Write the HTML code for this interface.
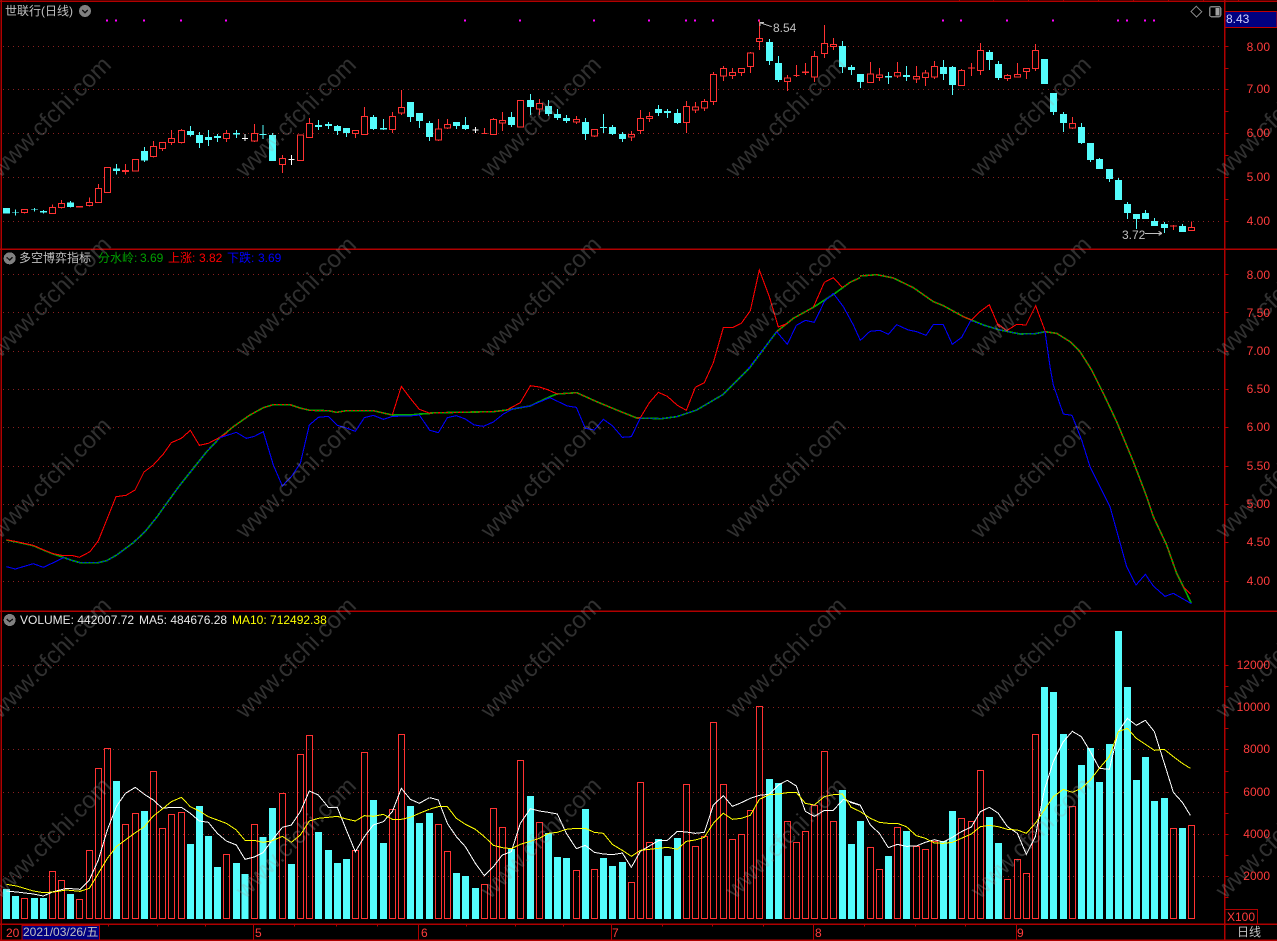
<!DOCTYPE html>
<html><head><meta charset="utf-8"><title>世联行(日线)</title>
<style>
html,body{margin:0;padding:0;background:#000;width:1277px;height:941px;overflow:hidden}
#w{position:relative;width:1277px;height:941px;background:#000;overflow:hidden}
svg{position:absolute;left:0;top:0}
.t{position:absolute;white-space:pre;font:12px/14px "Liberation Sans","Noto Sans CJK SC",sans-serif;color:#c0c0c0}
.r{color:#ff3c3c}
.a{right:7px}
</style></head><body><div id="w">
<svg width="1277" height="941" viewBox="0 0 3831 2823" shape-rendering="crispEdges" fill="none">
<!-- grid -->
<path stroke="#8a2020" stroke-width="3" stroke-dasharray="3 12" d="M9 140H3660M9 268H3660M9 400H3660M9 532H3660M9 664H3660M9 823H3660M9 937H3660M9 1054H3660M9 1168H3660M9 1282H3660M9 1399H3660M9 1514H3660M9 1628H3660M9 1744H3660M9 1996H3660M9 2122H3660M9 2248H3660M9 2377H3660M9 2503H3660M9 2629H3660"/>
<!-- magenta dots -->
<path stroke="#ff00ff" stroke-width="6" d="M321 59V65M348 59V65M432 59V65M543 59V65M678 59V65M1395 59V65M1560 59V65M1782 59V65M1947 59V65M2058 59V65M2085 59V65M2139 59V65M2277 59V65M2829 59V65M2883 59V65M3021 59V65M3159 59V65M3354 59V65M3381 59V65M3435 59V65M3462 59V65"/>
<!-- candles 1 -->
<g>
<path stroke="#ff3232" stroke-width="3" d="M73 628V641M157 613V641M184 600V626M268 592V620M295 552V608M376 492V524M460 423V472M487 427V453M514 390V435M544 387V431M679 390V426M763 372V426M847 465V519M928 354V413M1066 390V414M1093 321V405M1177 336V399M1204 270V345"/>
<path stroke="#ff3232" stroke-width="3" fill="#000" d="M64 628H82V638H64ZM148 622H166V641H148ZM175 610H193V623H175ZM259 607H277V617H259ZM286 565H304V608H286ZM313 502H331V578H313ZM397 478H415V513H397ZM451 439H469V470H451ZM478 427H496V446H478ZM505 415H523V428H505ZM535 391H553V428H535ZM670 400H688V416H670ZM754 400H772V423H754ZM838 475H856V494H838ZM892 405H910V482H892ZM919 371H937V413H919ZM1057 391H1075V401H1057ZM1084 349H1102V404H1084ZM1168 349H1186V389H1168ZM1195 322H1213V339H1195Z"/>
<path fill="#ff3232" d="M228 618H249V623H228ZM366 510H387V516H366Z"/>
<path stroke="#54fcfc" stroke-width="3" d="M46 628V647M103 624V635M130 630V641M211 603V623M349 492V524M433 441V486M571 378V410M598 396V444M625 390V438M652 402V426M709 390V414M789 375V417M817 399V405M955 360V390M985 366V387M1012 375V405M1039 384V411M1120 345V390M1150 357V390M1231 306V366M1258 339V384M1288 363V423"/>
<path stroke="#54fcfc" stroke-width="21" d="M19 624V641M46 637V639M103 628V630M130 633V638M211 608V621M349 506V513M433 453V481M571 393V405M598 405V429M625 411V420M652 408V414M709 399V404M789 402V405M817 405V483M955 375V381M985 372V378M1012 378V393M1039 384V399M1120 351V387M1150 384V389M1231 306V351M1258 339V363M1288 369V411"/>
<path stroke="#fff" stroke-width="3" d="M735 402V423M874 465V495M726 416H744M865 478H883"/>
</g>
<!-- candles 2 -->
<g transform="translate(1290,0)">
<path stroke="#ff3232" stroke-width="3" d="M25 357V423M52 357V387M163 384V402M190 354V405M217 336V393M328 297V345M439 348V372M493 388V411M604 393V423M631 330V402M658 336V366M769 303V399M796 306V339M823 297V333M850 216V315M880 198V243M907 204V237M934 204V228M961 156V219M988 60V150M1072 225V273M1099 195V231M1126 189V225M1153 153V246M1183 75V174M1210 114V150M154 400H172M1090 227H1108"/>
<path stroke="#ff3232" stroke-width="3" fill="#000" d="M16 387H34V420H16ZM43 373H61V384H43ZM181 358H199V404H181ZM208 361H226V369H208ZM262 301H280V381H262ZM319 310H337V327H319ZM430 358H448V366H430ZM484 389H502V408H484ZM595 403H613V411H595ZM622 355H640V392H622ZM649 349H667V356H649ZM760 319H778V368H760ZM787 321H805V330H787ZM814 304H832V324H814ZM841 223H859V305H841ZM871 205H889V228H871ZM898 217H916V227H898ZM925 205H943V218H925ZM952 159H970V200H952ZM979 115H997V125H979ZM1063 234H1081V245H1063ZM1144 169H1162V231H1144ZM1174 130H1192V161H1174ZM1201 133H1219V140H1201Z"/>
<path fill="#ff3232" d="M1116 214H1137V219H1116Z"/>
<path stroke="#54fcfc" stroke-width="3" d="M79 366V387M106 351V390M244 336V381M301 282V345M355 300V348M382 327V360M409 345V369M466 354V420M520 342V399M547 375V405M577 396V426M685 315V348M712 327V354M742 327V372M1018 117V195M1045 168V246M1237 123V219M1264 195V225M1291 222V264"/>
<path stroke="#54fcfc" stroke-width="21" d="M79 366V378M106 375V387M244 351V375M301 300V321M355 318V342M382 342V354M409 354V363M466 366V402M520 381V384M547 381V402M577 402V417M685 327V339M712 333V339M742 339V369M1018 126V183M1045 189V240M1237 138V201M1264 201V210M1291 222V246"/>
<path stroke="#fff" stroke-width="3" d="M136 381V399M127 390H145"/>
<path stroke="#c0c0c0" stroke-width="3" d="M990 68L1025 80M990 68H1002M990 68V78"/>
</g>
<!-- candles 3 -->
<g transform="translate(2550,0)">
<path stroke="#ff3232" stroke-width="3" d="M61 186V249M88 204V243M142 186V234M199 198V249M226 210V258M253 183V237M334 207V258M364 189V228M391 129V225M472 222V243M502 189V231M529 204V237M556 132V213M667 351V387M970 675V690M1024 664V693"/>
<path stroke="#ff3232" stroke-width="3" fill="#000" d="M52 222H70V248H52ZM79 225H97V233H79ZM133 217H151V228H133ZM190 229H208V237H190ZM217 219H235V233H217ZM244 199H262V231H244ZM325 211H343V257H325ZM382 151H400V211H382ZM463 226H481V236H463ZM493 223H511V231H493ZM520 205H538V214H520ZM547 151H565V205H547ZM658 370H676V384H658ZM1015 683H1033V692H1015Z"/>
<path fill="#ff3232" d="M354 202H375V206H354ZM960 676H981V680H960Z"/>
<path stroke="#54fcfc" stroke-width="3" d="M115 216V252M169 198V243M280 180V240M307 198V285M418 150V210M445 183V240M610 279V345M640 336V396M694 369V432M721 429V486M748 474V507M778 507V546M805 534V600M832 606V657M859 642V687M886 630V657M913 654V678M943 666V699M997 672V696"/>
<path stroke="#54fcfc" stroke-width="21" d="M115 228V233M169 225V231M280 201V222M307 201V255M418 156V180M445 192V234M583 177V252M610 279V336M640 342V369M694 381V429M721 429V480M748 477V507M778 507V537M805 540V600M832 612V639M859 642V657M886 639V657M913 663V678M943 672V684M997 678V696"/>
<path stroke="#c0c0c0" stroke-width="3" d="M885 700H936M936 700l-10-6M936 700l-10 6"/>
</g>
<!-- indicator pane: central line -->
<g stroke="#00a800" stroke-width="5">
<path transform="translate(0,1110)" d="M19 510L50 516 100 527 130 540 160 552 190 562 215 571 240 578 295 578 320 572 350 555 400 518 435 485 470 442 500 400 540 345 580 295 620 245 660 203 700 170 750 135 790 113 820 104 870 104 900 114 930 121 985 122 1010 127 1040 122 1120 122 1150 129 1177 135 1230 135 1260 132 1290 131"/>
<path transform="translate(1290,750)" d="M0 489L80 487 190 485 230 480 300 468 360 440 380 432 440 428 500 455 570 484 620 504 695 506 740 500 800 480 880 433 960 352 1040 245 1090 205 1150 172 1215 130 1260 97 1290 83"/>
<path transform="translate(2100,750)" d="M480 78L530 74 580 84 640 113 700 155 730 167 790 200 850 225 900 240"/>
<path transform="translate(2970,870)" d="M30 120L90 132 135 131 165 125 200 130 240 155 270 185 305 240 340 310 380 395 430 515 470 620 490 680 530 765 560 850 580 890 604 940"/>
</g>
<!-- red line solid -->
<g stroke="#ff0000" stroke-width="3.2">
<path transform="translate(0,1110)" d="M19 509L50 515 100 526 130 539 160 551 190 557 215 556 238 562 270 545 295 512 320 450 348 380 378 376 405 360 432 306 460 285 490 252 514 218 544 205 571 181 598 226 625 220 652 206 680 190M1177 135L1204 49 1231 85 1258 118 1290 130"/>
<path transform="translate(1290,750)" d="M230 480L271 458 301 407 328 411 355 420 382 432M620 504L631 503 658 458 685 427 712 439 742 466 769 481 796 412 823 398 850 338 880 233 907 233 934 220 961 182 988 60 1018 140 1045 231 1072 220M1150 172L1183 97 1210 83 1237 112"/>
<path transform="translate(2100,750)" d="M790 200L815 210 840 185 868 164 895 228 900 232"/>
<path transform="translate(2970,870)" d="M0 50L22 100 50 122 80 103 108 105 137 47 165 122M580 890L602 912"/>
<path stroke-dasharray="6 6" transform="translate(0,1110)" d="M660 203L700 170 750 135 790 113 820 104 870 104 900 114 930 121 985 122 1010 127 1040 122 1120 122 1150 129 1177 135"/>
<path stroke-dasharray="6 6" transform="translate(1290,750)" d="M0 489L80 487 190 485 230 480M382 432L440 428 500 455 570 484 620 504M1040 245L1090 205 1150 172M1237 112L1260 97 1290 83"/>
<path stroke-dasharray="6 6" transform="translate(2100,750)" d="M480 78L530 74 580 84 640 113 700 155 730 167 790 200"/>
<path stroke-dasharray="6 6" transform="translate(2970,870)" d="M165 125L200 130 240 155 270 185 305 240 340 310 380 395 430 515 470 620 490 680 530 765 560 850 580 890"/>
</g>
<!-- blue line -->
<g stroke="#0000ff" stroke-width="3.2">
<path transform="translate(0,1110)" d="M19 590L46 597 100 581 130 592 160 578 190 563M660 203L709 187 739 205 763 199 790 185 820 285 847 348 874 320 901 280 928 165 955 142 985 139 1012 166 1039 174 1066 184 1093 143 1120 136 1150 148 1177 139 1230 138 1258 135 1290 182"/>
<path transform="translate(1290,750)" d="M0 541L25 548 52 503 79 497 106 507 133 525 160 529 190 516 220 492 250 476 300 468 360 443 412 468 439 472 466 535 493 540 520 508 547 527 577 562 604 560 631 504M1040 245L1072 283 1099 226 1126 211 1153 217 1183 155 1210 130"/>
<path transform="translate(2100,750)" d="M400 130L430 170 460 225 481 271 510 244 540 241 565 253 590 224 625 240 650 245 678 256 700 224 730 224 757 283 785 262 812 212"/>
<path transform="translate(2970,870)" d="M165 125L180 230 190 285 220 372 246 376 275 450 300 530 360 650 385 740 410 830 438 885 466 853 490 888 525 919 550 910 604 941"/>
<path stroke-dasharray="6 6" transform="translate(0,1110)" d="M190 562L215 571 240 578 295 578 320 572 350 555 400 518 435 485 470 442 500 400 540 345 580 295 620 245 660 203"/>
<path stroke-dasharray="6 6" transform="translate(1290,750)" d="M631 504L695 506 740 500 800 480 880 433 960 352 1040 245"/>
<path stroke-dasharray="6 6" transform="translate(2100,750)" d="M145 355L230 245"/>
<path stroke-dasharray="6 6" transform="translate(2100,750)" d="M812 212L850 225 900 240"/>
<path stroke-dasharray="6 6" transform="translate(2970,870)" d="M30 120L90 132 135 131 165 125"/>
</g>
<!-- volume bars -->
<g transform="translate(0,1830)">
<path stroke="#ff3232" stroke-width="3" d="M64 865H82V926H64ZM148 784H166V926H148ZM175 811H193V926H175ZM229 868H247V926H229ZM259 721H277V926H259ZM286 475H304V926H286ZM313 415H331V926H313ZM367 643H385V926H367ZM397 610H415V926H397ZM451 484H469V926H451ZM478 655H496V926H478ZM505 613H523V926H505ZM535 607H553V926H535ZM670 733H688V926H670ZM754 643H772V926H754ZM838 550H856V926H838ZM892 433H910V926H892ZM919 376H937V926H919ZM1057 721H1075V926H1057ZM1084 427H1102V926H1084ZM1168 598H1186V926H1168ZM1195 373H1213V926H1195Z"/>
<path stroke="#54fcfc" stroke-width="21" d="M19 837V927M46 858V927M103 864V927M130 864V927M211 852V927M349 513V927M433 603V927M571 702V927M598 588V927M625 678V927M652 771V927M709 759V927M735 792V927M789 681V927M817 594V927M874 762V927M955 666V927M985 720V927M1012 759V927M1039 747V927M1120 570V927M1150 699V927M1231 588V927M1258 639V927M1288 609V927"/>
<path stroke="#fff" stroke-width="3" d="M19 843L50 846 100 852 130 858 160 845 200 835 240 838 268 810 295 750 322 660 349 590 376 550 406 532 433 553 460 570 487 595 514 592 544 592 571 610 598 633 625 637 652 670 679 693 709 705 735 748 763 741 789 728 817 690 847 652 874 645 901 605 928 543 955 555 985 592 1012 592 1039 660 1066 725 1093 680 1120 645 1150 635 1177 605 1204 535 1231 568 1258 580 1288 563"/>
<path stroke="#ffff00" stroke-width="3" d="M19 823L50 828 100 843 130 848 160 846 200 840 240 844 268 835 295 790 322 745 349 710 376 690 406 668 433 650 460 618 487 597 514 575 544 562 571 590 598 603 625 620 652 630 679 640 709 660 735 691 763 691 789 697 817 692 847 679 874 697 901 675 928 633 955 625 985 622 1012 619 1039 627 1066 633 1093 617 1120 619 1150 613 1177 628 1204 628 1231 622 1258 610 1288 598"/>
</g>
<g transform="translate(1290,1830)">
<path stroke="#ff3232" stroke-width="3" d="M16 643H34V926H16ZM43 724H61V926H43ZM154 823H172V926H154ZM181 595H199V926H181ZM208 652H226V926H208ZM262 451H280V926H262ZM319 637H337V926H319ZM430 781H448V926H430ZM484 778H502V926H484ZM595 817H613V926H595ZM622 517H640V926H622ZM649 697H667V926H649ZM760 523H778V926H760ZM787 709H805V926H787ZM814 679H832V926H814ZM841 337H859V926H841ZM871 523H889V926H871ZM898 688H916V926H898ZM925 673H943V926H925ZM952 601H970V926H952ZM979 289H997V926H979ZM1063 634H1081V926H1063ZM1090 697H1108V926H1090ZM1117 664H1135V926H1117ZM1144 586H1162V926H1144ZM1174 424H1192V926H1174ZM1201 634H1219V926H1201Z"/>
<path stroke="#54fcfc" stroke-width="21" d="M79 789V927M106 798V927M136 834V927M244 717V927M301 558V927M355 669V927M382 741V927M409 744V927M466 597V927M520 744V927M547 768V927M577 756V927M685 687V927M712 738V927M742 684V927M1018 507V927M1045 519V927M1237 540V927M1264 702V927M1291 633V927"/>
<path stroke="#fff" stroke-width="3" d="M0 563L25 570 52 640 79 680 106 710 136 760 163 797 190 770 217 735 244 725 271 640 301 596 328 603 355 607 382 612 409 670 439 716 466 706 493 727 520 732 547 734 577 729 604 772 631 724 658 708 685 692 712 691 742 664 769 666 796 670 823 667 850 585 880 557 907 589 934 578 961 565 988 556 1018 553 1045 525 1072 511 1099 528 1126 604 1153 619 1183 601 1210 601 1240 568 1264 576 1291 585"/>
<path stroke="#ffff00" stroke-width="3" d="M0 597L25 590 52 590 79 625 106 643 136 658 163 680 190 706 217 713 244 716 271 703 301 694 328 685 355 670 382 667 409 658 439 655 466 655 493 667 520 670 547 703 577 721 604 739 631 721 658 718 685 715 712 712 742 718 769 694 796 690 823 682 850 640 880 610 907 628 934 625 961 616 988 568 1018 554 1045 552 1072 548 1099 547 1126 580 1153 585 1183 560 1210 554 1237 552 1264 592 1291 605"/>
</g>
<g transform="translate(2550,1830)">
<path stroke="#ff3232" stroke-width="3" d="M52 712H70V926H52ZM79 778H97V926H79ZM133 652H151V926H133ZM190 709H208V926H190ZM217 718H235V926H217ZM244 694H262V926H244ZM325 625H343V926H325ZM355 634H373V926H355ZM382 481H400V926H382ZM463 808H481V926H463ZM493 748H511V926H493ZM520 790H538V926H520ZM547 373H565V926H547ZM658 589H676V926H658ZM961 655H979V926H961ZM1015 646H1033V926H1015Z"/>
<path stroke="#54fcfc" stroke-width="21" d="M115 738V927M169 663V927M280 693V927M307 603V927M418 621V927M445 699V927M583 231V927M610 246V927M640 372V927M694 465V927M721 414V927M748 516V927M778 402V927M805 63V927M832 231V927M859 510V927M886 441V927M913 573V927M943 564V927M997 654V927"/>
<path stroke="#fff" stroke-width="3" d="M0 577L31 586 61 645 88 670 115 713 142 703 169 709 199 708 226 697 253 689 280 696 307 682 334 665 364 651 391 605 418 592 445 610 472 650 502 670 529 733 556 680 583 540 610 455 640 395 667 364 694 380 721 425 748 475 778 478 805 365 832 325 859 346 886 331 913 365 943 460 970 547 997 577 1021 616"/>
<path stroke="#ffff00" stroke-width="3" d="M0 590L31 605 61 625 88 637 115 640 142 640 169 650 199 677 226 685 253 699 280 700 307 697 334 685 364 672 391 650 418 646 445 650 472 658 502 660 529 670 556 640 583 600 610 560 640 538 667 547 694 535 721 510 748 475 778 440 805 365 832 355 859 385 886 403 913 421 943 418 970 440 997 460 1021 475"/>
</g>
<!-- frame -->
<rect x="3675" y="35" width="156" height="47" fill="#000080" stroke="#c00000" stroke-width="3"/>
<path stroke="#b00000" stroke-width="4" d="M0 4H3831M4 0V2823M0 748H3831M0 1834H3831M0 2773H3831M0 2821H3831M3674 0V2823"/>
<path stroke="#b00000" stroke-width="3" d="M3674 140H3686M3674 205H3686M3674 268H3686M3674 335H3686M3674 400H3686M3674 466H3686M3674 532H3686M3674 598H3686M3674 664H3686M3674 823H3686M3674 937H3686M3674 1054H3686M3674 1168H3686M3674 1282H3686M3674 1399H3686M3674 1514H3686M3674 1628H3686M3674 1744H3686M3674 1996H3686M3674 2059H3686M3674 2122H3686M3674 2185H3686M3674 2248H3686M3674 2314H3686M3674 2377H3686M3674 2440H3686M3674 2503H3686M3674 2566H3686M3674 2629H3686M3674 2692H3686M75 0V4M2878 0V4M2980 0V4M3085 0V4M3190 0V4M3295 0V4M3400 0V4M3505 0V4M3610 0V4M3715 0V4M325 2773V2780M472 2773V2780M616 2773V2780M883 2773V2780M1009 2773V2780M1132 2773V2780M1399 2773V2780M1546 2773V2780M1690 2773V2780M1987 2773V2780M2137 2773V2780M2290 2773V2780M2593 2773V2780M2746 2773V2780M2896 2773V2780M761 2773V2821M1255 2773V2821M1835 2773V2821M2441 2773V2821M3049 2773V2821"/>
<rect x="66" y="2777" width="232" height="43" fill="#000080" stroke="#b00000" stroke-width="3"/>
<rect x="3675" y="2728" width="97" height="44" stroke="#b00000" stroke-width="3"/>
<!-- title icons -->
<circle cx="255" cy="33" r="18" fill="#808080"/><path stroke="#111" stroke-width="4" d="M246 30l9 8 9-8"/>
<circle cx="29" cy="775" r="18" fill="#808080"/><path stroke="#111" stroke-width="4" d="M20 772l9 8 9-8"/>
<circle cx="29" cy="1860" r="18" fill="#808080"/><path stroke="#111" stroke-width="4" d="M20 1857l9 8 9-8"/>
<path stroke="#808080" stroke-width="3" d="M3589 19L3605 35 3589 51 3573 35Z"/>
<rect x="3629" y="20" width="33" height="30" rx="5" stroke="#808080" stroke-width="4"/>
<rect x="3646" y="24" width="13" height="22" fill="#a0a0a0"/>
</svg>
<!-- watermark -->
<svg width="1277" height="941" viewBox="0 0 1277 941" style="font:24px 'Liberation Sans',sans-serif" fill="#a0a0a0" fill-opacity=".3" text-anchor="middle">
<text transform="translate(50,116) rotate(-45)" y="9">www.cfchi.com</text><text transform="translate(295,116) rotate(-45)" y="9">www.cfchi.com</text><text transform="translate(540,116) rotate(-45)" y="9">www.cfchi.com</text><text transform="translate(785,116) rotate(-45)" y="9">www.cfchi.com</text><text transform="translate(1030,116) rotate(-45)" y="9">www.cfchi.com</text><text transform="translate(1275,116) rotate(-45)" y="9">www.cfchi.com</text>
<text transform="translate(50,296) rotate(-45)" y="9">www.cfchi.com</text><text transform="translate(295,296) rotate(-45)" y="9">www.cfchi.com</text><text transform="translate(540,296) rotate(-45)" y="9">www.cfchi.com</text><text transform="translate(785,296) rotate(-45)" y="9">www.cfchi.com</text><text transform="translate(1030,296) rotate(-45)" y="9">www.cfchi.com</text><text transform="translate(1275,296) rotate(-45)" y="9">www.cfchi.com</text>
<text transform="translate(50,477) rotate(-45)" y="9">www.cfchi.com</text><text transform="translate(295,477) rotate(-45)" y="9">www.cfchi.com</text><text transform="translate(540,477) rotate(-45)" y="9">www.cfchi.com</text><text transform="translate(785,477) rotate(-45)" y="9">www.cfchi.com</text><text transform="translate(1030,477) rotate(-45)" y="9">www.cfchi.com</text><text transform="translate(1275,477) rotate(-45)" y="9">www.cfchi.com</text>
<text transform="translate(50,657) rotate(-45)" y="9">www.cfchi.com</text><text transform="translate(295,657) rotate(-45)" y="9">www.cfchi.com</text><text transform="translate(540,657) rotate(-45)" y="9">www.cfchi.com</text><text transform="translate(785,657) rotate(-45)" y="9">www.cfchi.com</text><text transform="translate(1030,657) rotate(-45)" y="9">www.cfchi.com</text><text transform="translate(1275,657) rotate(-45)" y="9">www.cfchi.com</text>
<text transform="translate(50,837) rotate(-45)" y="9">www.cfchi.com</text><text transform="translate(295,837) rotate(-45)" y="9">www.cfchi.com</text><text transform="translate(540,837) rotate(-45)" y="9">www.cfchi.com</text><text transform="translate(785,837) rotate(-45)" y="9">www.cfchi.com</text><text transform="translate(1030,837) rotate(-45)" y="9">www.cfchi.com</text><text transform="translate(1275,837) rotate(-45)" y="9">www.cfchi.com</text>
</svg>
<!-- labels -->
<div class="t" style="left:5px;top:4px">世联行(日线)</div>
<div class="t" style="left:773px;top:21px">8.54</div>
<div class="t" style="left:1122px;top:228px">3.72</div>
<div class="t" style="left:1226px;top:12px;color:#d0d0ff">8.43</div>
<div class="t r a" style="top:40px">8.00</div><div class="t r a" style="top:82px">7.00</div><div class="t r a" style="top:126px">6.00</div><div class="t r a" style="top:170px">5.00</div><div class="t r a" style="top:214px">4.00</div>
<div class="t" style="left:19px;top:251px">多空博弈指标</div>
<div class="t" style="left:98px;top:251px;color:#00a000">分水岭:</div><div class="t" style="left:140px;top:251px;color:#00a000">3.69</div>
<div class="t" style="left:168px;top:251px;color:#ff0000">上涨:</div><div class="t" style="left:199px;top:251px;color:#ff0000">3.82</div>
<div class="t" style="left:227px;top:251px;color:#0000ff">下跌:</div><div class="t" style="left:258px;top:251px;color:#0000ff">3.69</div>
<div class="t r a" style="top:268px">8.00</div><div class="t r a" style="top:306px">7.50</div><div class="t r a" style="top:344px">7.00</div><div class="t r a" style="top:382px">6.50</div><div class="t r a" style="top:420px">6.00</div><div class="t r a" style="top:459px">5.50</div><div class="t r a" style="top:497px">5.00</div><div class="t r a" style="top:535px">4.50</div><div class="t r a" style="top:574px">4.00</div>
<div class="t" style="left:20px;top:613px;color:#e8e8e8">VOLUME: 442007.72</div>
<div class="t" style="left:139px;top:613px;color:#e8e8e8">MA5: 484676.28</div>
<div class="t" style="left:232px;top:613px;color:#ffff00">MA10: 712492.38</div>
<div class="t r a" style="top:658px">12000</div><div class="t r a" style="top:700px">10000</div><div class="t r a" style="top:742px">8000</div><div class="t r a" style="top:785px">6000</div><div class="t r a" style="top:827px">4000</div><div class="t r a" style="top:869px">2000</div>
<div class="t r" style="left:1227px;top:910px">X100</div>
<div class="t r" style="left:6px;top:926px">20</div>
<div class="t" style="left:23px;top:925px">2021/03/26/五</div>
<div class="t r" style="left:255px;top:926px">5</div><div class="t r" style="left:421px;top:926px">6</div><div class="t r" style="left:612px;top:926px">7</div><div class="t r" style="left:815px;top:926px">8</div><div class="t r" style="left:1017px;top:926px">9</div>
<div class="t" style="left:1237px;top:925px">日线</div>
</div></body></html>
